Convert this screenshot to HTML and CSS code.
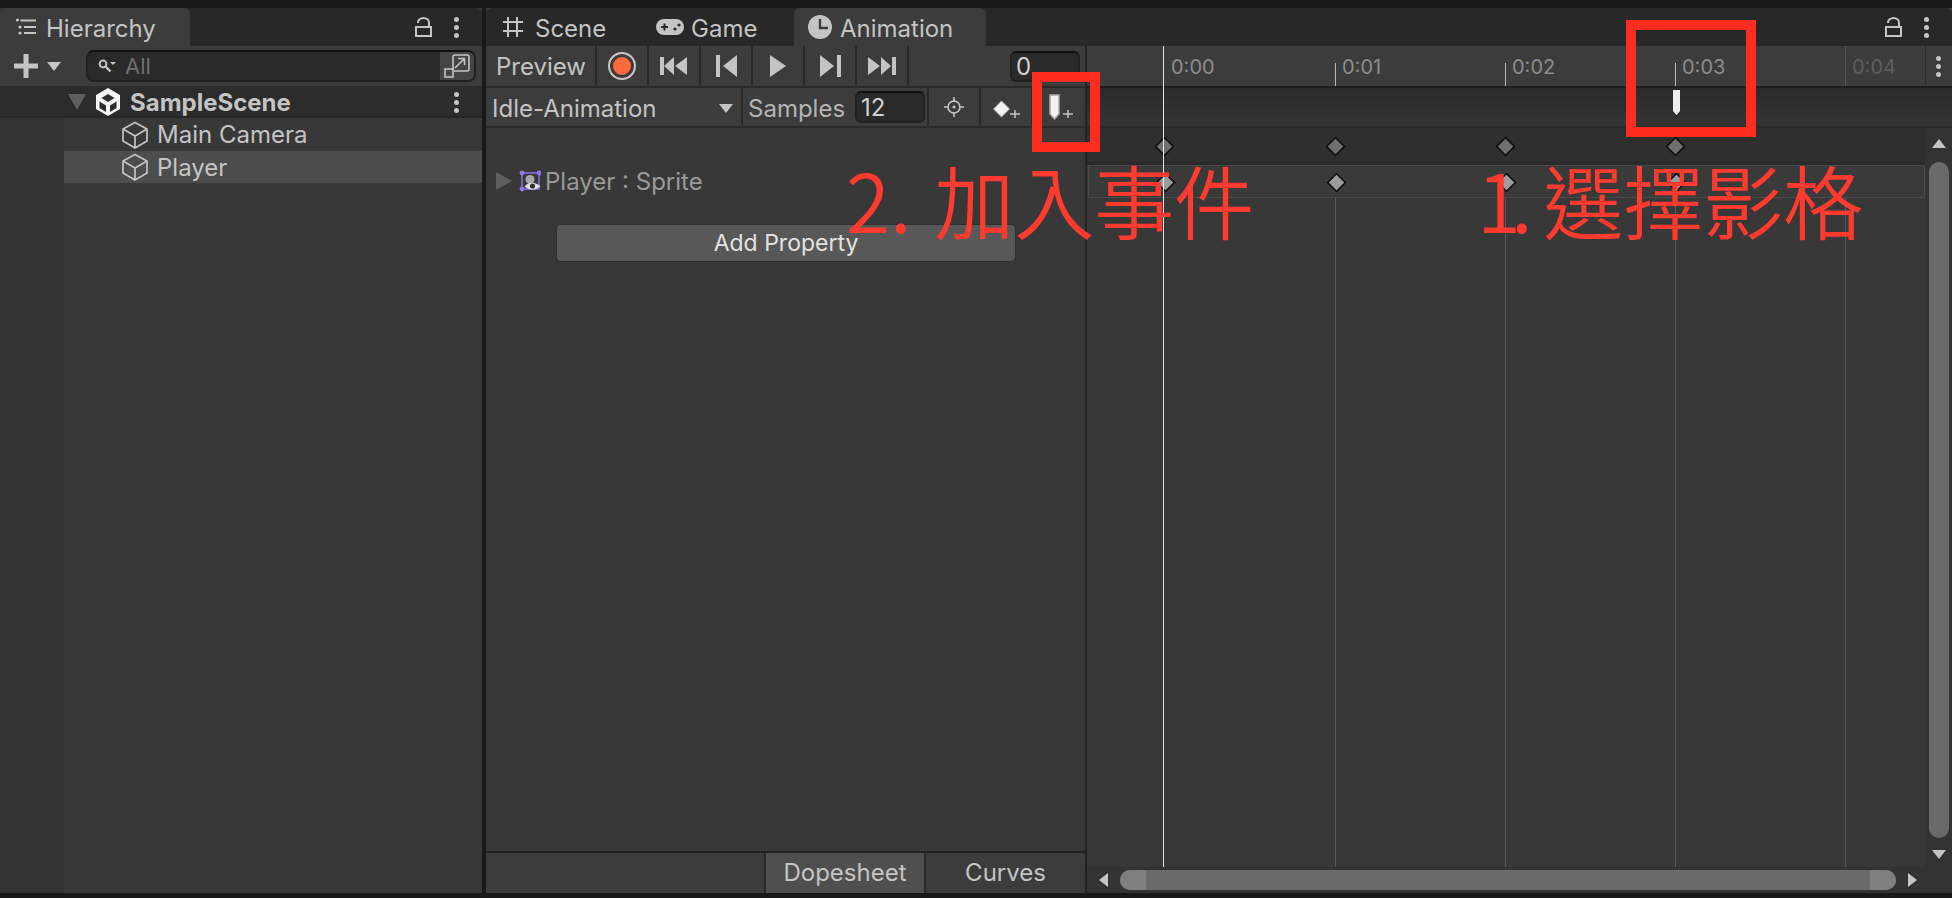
FILE: index.html
```html
<!DOCTYPE html>
<html lang="en">
  <head>
    <meta charset="UTF-8" />
    <title>Animation</title>
    <link rel="stylesheet" href="styles.css">
  </head>
  <body>
    <div class="editor">
      <section class="hierarchy">
        <div class="tabbar">
          <div class="tab active hier-tab">
            <svg class="ic" width="22" height="18" viewBox="0 0 22 18"><g fill="#c4c4c4"><circle cx="2.500" cy="2" r="1.600"/><circle cx="5" cy="9" r="1.600"/><circle cx="5" cy="15" r="1.600"/><rect x="5.500" y="1.500" width="15.500" height="2"/><rect x="9" y="8" width="12" height="2"/><rect x="9" y="14" width="12" height="2"/></g></svg>
            <span>Hierarchy</span>
          </div>
          <div class="tab-tools">
            <svg class="ic" width="17" height="20" viewBox="0 0 17 20"><path d="M1 10h15v9H1zM3 6v-.500a5.500 4.500 0 0 1 11 0V10" fill="none" stroke="#c4c4c4" stroke-width="2"/></svg>
            <span class="kebab"><i></i><i></i><i></i></span>
          </div>
        </div>
        <div class="hier-toolbar">
          <svg class="ic" width="24" height="24" viewBox="0 0 24 24"><path d="M0 12h24M12 0v24" stroke="#c4c4c4" stroke-width="5"/></svg>
          <span class="tri-down"></span>
          <div class="search">
            <svg class="ic" width="18" height="14" viewBox="0 0 18 14"><circle cx="5" cy="5" r="3.400" fill="none" stroke="#c4c4c4" stroke-width="2"/><path d="M7.500 7.500l5 5" stroke="#c4c4c4" stroke-width="2.400"/><path d="M12 3h6l-3 3z" fill="#c4c4c4"/></svg>
            <span class="search-hint">All</span>
            <span class="search-btn">
              <svg class="ic" width="26" height="24" viewBox="0 0 26 24"><path d="M9 16V3a2 2 0 0 1 2-2h12a2 2 0 0 1 2 2v12a2 2 0 0 1-2 2H10" fill="none" stroke="#c4c4c4" stroke-width="1.600"/><path d="M11 14l9-9M14 4.500h6.500V11" fill="none" stroke="#c4c4c4" stroke-width="1.600"/><rect x="1" y="15" width="8" height="8" fill="none" stroke="#c4c4c4" stroke-width="1.600"/></svg>
            </span>
          </div>
        </div>
        <div class="scene-row">
          <span class="tri-tree"></span>
          <svg class="ic" width="24" height="28" viewBox="0 0 24 28"><path d="M12 0l12 7v14l-12 7-12-7V7z" fill="#f2f2f2"/><path d="M12 6l6.500 4L12 14l-6.500-4zM3.500 13.500L10 17.500V24l-6.500-4zM20.500 13.500L14 17.500V24l6.500-4z" fill="#2c2c2c"/></svg>
          <span class="scene-name">SampleScene</span>
          <span class="kebab"><i></i><i></i><i></i></span>
        </div>
        <div class="tree">
          <div class="gutter"></div>
          <div class="items">
            <div class="item">
              <svg class="ic" width="26" height="28" viewBox="0 0 26 28"><path d="M13 1.500L25 8v12l-12 7-12-7V8zM1 8l12 7 12-7M13 15v12" fill="none" stroke="#c4c4c4" stroke-width="1.700"/></svg>
              <span>Main Camera</span>
            </div>
            <div class="item selected">
              <svg class="ic" width="26" height="28" viewBox="0 0 26 28"><path d="M13 1.500L25 8v12l-12 7-12-7V8zM1 8l12 7 12-7M13 15v12" fill="none" stroke="#c4c4c4" stroke-width="1.700"/></svg>
              <span>Player</span>
            </div>
          </div>
        </div>
      </section>

      <section class="animation">
        <div class="tabbar">
          <div class="tab scene-tab">
            <svg class="ic" width="20" height="20" viewBox="0 0 20 20"><path d="M5 0v20M14 0v20M0 5h20M0 14h20" stroke="#c4c4c4" stroke-width="2"/></svg>
            <span>Scene</span>
          </div>
          <div class="tab game-tab">
            <svg class="ic" width="28" height="16" viewBox="0 0 28 16"><rect width="28" height="16" rx="8" fill="#c4c4c4"/><path d="M5 8h7M8.500 4.500v7" stroke="#282828" stroke-width="2"/><circle cx="19" cy="10" r="1.600" fill="#282828"/><circle cx="23" cy="6" r="1.600" fill="#282828"/></svg>
            <span>Game</span>
          </div>
          <div class="tab active anim-tab">
            <svg class="ic" width="24" height="24" viewBox="0 0 24 24"><circle cx="12" cy="12" r="12" fill="#c4c4c4"/><path d="M12 4v9h8" fill="none" stroke="#3c3c3c" stroke-width="2.400"/></svg>
            <span>Animation</span>
          </div>
          <div class="tab-tools">
            <svg class="ic" width="17" height="20" viewBox="0 0 17 20"><path d="M1 10h15v9H1zM3 6v-.500a5.500 4.500 0 0 1 11 0V10" fill="none" stroke="#c4c4c4" stroke-width="2"/></svg>
            <span class="kebab"><i></i><i></i><i></i></span>
          </div>
        </div>

        <div class="anim-body">
          <div class="controls">
            <div class="ctrl-row">
              <div class="cell preview">Preview</div>
              <div class="cell btn"><span class="record"></span></div>
              <div class="cell btn">
                <svg class="ic" width="28" height="18" viewBox="0 0 28 18"><path d="M0 0h4v18H0zM14 0v18L4 9zM27 0v18L15 9z" fill="#c4c4c4"/></svg>
              </div>
              <div class="cell btn">
                <svg class="ic" width="21" height="22" viewBox="0 0 21 22"><path d="M0 0h4v22H0zM21 0v22L7 11z" fill="#c4c4c4"/></svg>
              </div>
              <div class="cell btn">
                <svg class="ic" width="16" height="22" viewBox="0 0 16 22"><path d="M0 0l16 11L0 22z" fill="#c4c4c4"/></svg>
              </div>
              <div class="cell btn">
                <svg class="ic" width="21" height="22" viewBox="0 0 21 22"><path d="M0 0l14 11L0 22zM17 0h4v22h-4z" fill="#c4c4c4"/></svg>
              </div>
              <div class="cell btn">
                <svg class="ic" width="28" height="18" viewBox="0 0 28 18"><path d="M0 0l12 9L0 18zM13 0l10 9-10 9zM24 0h4v18h-4z" fill="#c4c4c4"/></svg>
              </div>
              <div class="frame-wrap"><div class="field frame">0</div></div>
            </div>
            <div class="ctrl-row second">
              <div class="cell clip">
                <span>Idle-Animation</span>
                <span class="tri-down small"></span>
              </div>
              <div class="cell samples">
                <span>Samples</span>
                <div class="field rate">12</div>
              </div>
              <div class="cell btn">
                <svg class="ic" width="20" height="20" viewBox="0 0 20 20"><circle cx="10" cy="10" r="6" fill="none" stroke="#c4c4c4" stroke-width="1.600"/><circle cx="10" cy="10" r="1.500" fill="#c4c4c4"/><path d="M10 0v5M10 15v5M0 10h5M15 10h5" stroke="#c4c4c4" stroke-width="1.600"/></svg>
              </div>
              <div class="cell btn">
                <svg class="ic" width="30" height="28" viewBox="0 0 30 28"><path d="M10.500 8l8 8-8 8-8-8z" fill="#f2f2f2" stroke="#aaa" stroke-width="1"/><path d="M19 21h10M24 17v8" stroke="#c4c4c4" stroke-width="1.500"/></svg>
              </div>
              <div class="cell btn last">
                <svg class="ic" width="26" height="30" viewBox="0 0 26 30"><path d="M2 3h9v19l-4.500 5L2 22z" fill="#f2f2f2" stroke="#aaa" stroke-width="1.500"/><path d="M15 22h10M20 18v8" stroke="#c4c4c4" stroke-width="1.500"/></svg>
              </div>
            </div>
            <div class="props">
              <div class="prop-row">
                <span class="tri-right"></span>
                <svg class="ic" width="22" height="22" viewBox="0 0 22 22"><path d="M3 3h17v16H3z" fill="none" stroke="#8f74e8" stroke-width="1.400"/><g fill="#8f74e8"><circle cx="3" cy="3" r="2.400"/><circle cx="20" cy="3" r="2.400"/><circle cx="3" cy="19" r="2.400"/></g><circle cx="11" cy="9.500" r="4.500" fill="#a8a8a8"/><path d="M5.500 16.500q7.500-7.500 16 0-8.500 6.500-16 0z" fill="#e4e4e4"/><circle cx="13.500" cy="16" r="2.600" fill="#333"/></svg>
                <span>Player : Sprite</span>
              </div>
              <div class="add-btn">Add Property</div>
            </div>
            <div class="mode-tabs">
              <div class="mode-space"></div>
              <div class="mode on">Dopesheet</div>
              <div class="mode">Curves</div>
            </div>
          </div>

          <div class="timeline">
            <div class="ruler">
              <span class="label at-0">0:00</span>
              <span class="tick at-1"></span><span class="label at-1">0:01</span>
              <span class="tick at-2"></span><span class="label at-2">0:02</span>
              <span class="tick at-3"></span><span class="label at-3">0:03</span>
              <span class="tick tall at-4"></span><span class="label dim at-4">0:04</span>
              <span class="ruler-menu"><span class="kebab"><i></i><i></i><i></i></span></span>
            </div>
            <div class="event-row">
              <svg class="event-mark at-3" width="8" height="25" viewBox="0 0 8 25"><path d="M0 0h7v21l-3.500 4L0 21z" fill="#eee"/></svg>
            </div>
            <div class="key-row summary">
              <span class="key at-0"></span><span class="key at-1"></span><span class="key at-2"></span><span class="key at-3"></span>
            </div>
            <div class="key-row sprite">
              <span class="key at-0"></span><span class="key at-1"></span><span class="key at-2"></span><span class="key at-3"></span>
            </div>
            <div class="grid">
              <span class="line at-1"></span><span class="line at-2"></span><span class="line at-3"></span><span class="line at-4"></span>
            </div>
            <div class="vscroll">
              <span class="tri-up"></span>
              <span class="vthumb"></span>
              <span class="tri-down small"></span>
            </div>
            <div class="hscroll">
              <span class="tri-left"></span>
              <div class="hthumb"><span class="cap"></span><span class="cap"></span></div>
              <span class="tri-right-sm"></span>
            </div>
            <span class="playhead"></span>
          </div>
        </div>
      </section>
    </div>

    <div class="callout box-frame"></div>
    <div class="callout box-event"></div>
    <div class="note note-event">2. 加入事件</div>
    <div class="note note-frame"><span class="tight">1</span>. 選擇影格</div>
  </body>
</html>
```

FILE: styles.css
```css
* {
  box-sizing: border-box;
}

body {
  margin: 0;
  height: 898px;
  overflow: hidden;
  position: relative;
  background-color: #191919;
  color: #c4c4c4;
  font-family: Inter, "Noto Sans", sans-serif;
  font-size: 24px;
}

.editor {
  display: flex;
  gap: 4px;
  height: 893px;
  padding-top: 8px;
}

.ic {
  display: block;
  flex: none;
}

.hierarchy {
  width: 482px;
  display: flex;
  flex-direction: column;
  background-color: #383838;
}

.animation {
  flex: 1;
  display: flex;
  flex-direction: column;
  background-color: #3c3c3c;
  min-width: 0;
}

/* tab strips */
.tabbar {
  height: 38px;
  display: flex;
  background-color: #282828;
  border-radius: 6px 6px 0 0;
}

.tab {
  display: flex;
  align-items: center;
  height: 38px;
}

.tab span {
  margin-top: 2px;
}

.tab.active {
  background-color: #3c3c3c;
  border-radius: 6px 6px 0 0;
}

.hier-tab {
  width: 190px;
  padding-left: 15px;
  gap: 9px;
}

.scene-tab {
  width: 150px;
  padding-left: 17px;
  gap: 12px;
}

.game-tab {
  width: 158px;
  padding-left: 20px;
  gap: 7px;
}

.anim-tab {
  width: 192px;
  padding-left: 14px;
  gap: 8px;
}

.tab-tools {
  margin-left: auto;
  display: flex;
  align-items: center;
  gap: 22px;
  padding-right: 22px;
}

.kebab {
  display: flex;
  flex-direction: column;
  gap: 3px;
  width: 6px;
}

.kebab i {
  width: 5px;
  height: 5px;
  border-radius: 50%;
  background-color: #c4c4c4;
}

/* hierarchy */
.hier-toolbar {
  height: 40px;
  display: flex;
  align-items: center;
  padding-left: 14px;
  background-color: #3c3c3c;
}

.tri-down {
  width: 0;
  height: 0;
  margin-left: 9px;
  border-left: 7px solid transparent;
  border-right: 7px solid transparent;
  border-top: 9px solid #c4c4c4;
}

.search {
  display: flex;
  align-items: center;
  width: 390px;
  height: 32px;
  margin-left: 25px;
  padding-left: 10px;
  background-color: #2a2a2a;
  border: 2px solid #212121;
  border-top-color: #111;
  border-radius: 8px;
  overflow: hidden;
}

.search-hint {
  margin-left: 9px;
  font-size: 22px;
  color: #6e6e6e;
}

.search-btn {
  margin-left: auto;
  width: 34px;
  height: 100%;
  display: flex;
  align-items: center;
  justify-content: center;
  background-color: #454545;
}

.scene-row {
  height: 32px;
  display: flex;
  align-items: center;
  padding: 2px 22px 0 68px;
  background-color: #2c2c2c;
  border-bottom: 2px solid #262626;
}

.tri-tree {
  width: 0;
  height: 0;
  border-left: 9px solid transparent;
  border-right: 9px solid transparent;
  border-top: 16px solid #5e5e5e;
}

.scene-row .ic {
  margin-left: 10px;
}

.scene-name {
  margin-left: 10px;
  font-weight: 700;
  flex: 1;
}

.tree {
  flex: 1;
  display: flex;
}

.gutter {
  width: 64px;
  background-color: #333;
}

.items {
  flex: 1;
}

.item {
  height: 33px;
  display: flex;
  align-items: center;
  gap: 9px;
  padding-left: 58px;
}

.item.selected {
  background-color: #4d4d4d;
  height: 32px;
}

/* animation window */
.anim-body {
  flex: 1;
  display: flex;
  min-height: 0;
}

.controls {
  width: 601px;
  display: flex;
  flex-direction: column;
  border-right: 2px solid #232323;
}

.ctrl-row {
  height: 42px;
  display: flex;
  border-bottom: 2px solid #2a2a2a;
}

.ctrl-row.second {
  height: 40px;
}

.cell {
  display: flex;
  align-items: center;
  border-right: 2px solid #2a2a2a;
}

.second .clip,
.second .samples {
  padding-top: 2px;
}

.preview {
  width: 111px;
  padding-left: 10px;
}

.btn {
  width: 52px;
  justify-content: center;
}

.btn.last {
  border-right: 0;
  padding-left: 4px;
}

.record {
  width: 28px;
  height: 28px;
  border-radius: 50%;
  border: 2px solid #c4c4c4;
  background-color: #ff6a3c;
  box-shadow: inset 0 0 0 3px #3c3c3c;
}

.frame-wrap {
  flex: 1;
  display: flex;
  justify-content: flex-end;
  align-items: center;
  padding-right: 5px;
}

.field {
  background-color: #2a2a2a;
  border: 2px solid #212121;
  border-top-color: #111;
  border-radius: 6px;
  display: flex;
  align-items: center;
  padding-left: 4px;
  color: #d2d2d2;
}

.frame {
  width: 70px;
  height: 31px;
}

.clip {
  width: 257px;
  padding: 0 8px 0 6px;
  justify-content: space-between;
}

.samples {
  width: 186px;
  padding-left: 5px;
  gap: 10px;
  color: #b4b4b4;
}

.rate {
  width: 70px;
  height: 32px;
  margin-top: -2px;
}

.tri-down.small {
  margin: 0;
}

.props {
  flex: 1;
  position: relative;
  padding-top: 40px;
  background-color: #383838;
}

.prop-row {
  display: flex;
  align-items: center;
  padding-left: 10px;
  gap: 7px;
  height: 26px;
  color: #9a9a9a;
}

.prop-row .ic {
  margin-right: -3px;
}

.tri-right {
  width: 0;
  height: 0;
  border-top: 9px solid transparent;
  border-bottom: 9px solid transparent;
  border-left: 16px solid #5f5f5f;
}

.add-btn {
  width: 460px;
  height: 38px;
  margin: 30px 0 0 70px;
  display: flex;
  align-items: center;
  justify-content: center;
  border-radius: 5px;
  background-color: #585858;
  border: 1px solid #2f2f2f;
  font-size: 23px;
  color: #e2e2e2;
}

.mode-tabs {
  height: 42px;
  display: flex;
  border-top: 2px solid #232323;
}

.mode-space {
  width: 280px;
  border-right: 2px solid #2a2a2a;
}

.mode {
  width: 160px;
  display: flex;
  align-items: center;
  justify-content: center;
  border-right: 2px solid #2a2a2a;
  padding-bottom: 2px;
}

.mode:last-child {
  border-right: 0;
  flex: 1;
}

.mode.on {
  background-color: #4f4f4f;
}

/* timeline */
.timeline {
  flex: 1;
  position: relative;
  display: grid;
  grid-template-columns: 1fr 27px;
  grid-template-rows: 42px 40px 37px 33px 1fr 26px;
  background-color: #383838;
}

.ruler {
  grid-column: 1 / -1;
  position: relative;
  background-color: #3c3c3c;
  border-bottom: 2px solid #1e1e1e;
}

.ruler-menu {
  position: absolute;
  right: 0;
  top: 0;
  bottom: 0;
  width: 27px;
  display: flex;
  align-items: center;
  justify-content: center;
  background-color: #3c3c3c;
  border-left: 1px solid #2a2a2a;
}

.at-0 { left: 77px; }
.at-1 { left: 248px; }
.at-2 { left: 418px; }
.at-3 { left: 588px; }
.at-4 { left: 758px; }

.tick {
  position: absolute;
  bottom: 0;
  height: 23px;
  width: 1px;
  background-color: #b8b8b8;
}

.tick.tall {
  height: 40px;
  background-color: #555;
}

.label {
  position: absolute;
  top: 9px;
  margin-left: 7px;
  font-size: 20px;
  color: #8c8c8c;
}

.label.dim {
  color: #5e5e5e;
}

.event-row {
  grid-column: 1 / -1;
  position: relative;
  background-image: linear-gradient(#2b2b2b, #343434);
  border-bottom: 2px solid #2a2a2a;
}

.event-mark {
  position: absolute;
  top: 2px;
  margin-left: -2px;
}

.key-row {
  grid-column: 1;
  position: relative;
}

.summary {
  background-color: #2f2f2f;
  border-bottom: 3px solid #2a2a2a;
}

.sprite {
  background-color: #3a3a3a;
  border: 1px solid #4a4a4a;
  margin-left: 1px;
}

.key {
  position: absolute;
  top: 11px;
  width: 15px;
  height: 15px;
  margin-left: -7px;
  background-color: #6f6f6f;
  border: 2px solid #111;
  transform: rotate(45deg);
}

.sprite .key {
  top: 9px;
  margin-left: -8px;
  background-color: #9c9c9c;
}

.grid {
  grid-column: 1;
  grid-row: 5;
  position: relative;
}

.line {
  position: absolute;
  top: 0;
  bottom: 0;
  width: 1px;
  background-color: #5a5a5a;
}

.vscroll {
  grid-column: 2;
  grid-row: 3 / 6;
  display: flex;
  flex-direction: column;
  align-items: center;
  padding: 11px 0 8px;
  background-color: #333;
}

.tri-up {
  width: 0;
  height: 0;
  border-left: 7px solid transparent;
  border-right: 7px solid transparent;
  border-bottom: 9px solid #c4c4c4;
}

.vthumb {
  flex: 1;
  width: 20px;
  margin: 14px 0 12px;
  border-radius: 10px;
  background-color: #6a6a6a;
}

.hscroll {
  grid-column: 1 / -1;
  display: flex;
  align-items: center;
  padding: 0 35px 0 12px;
  background-color: #333;
}

.tri-left {
  width: 0;
  height: 0;
  border-top: 7px solid transparent;
  border-bottom: 7px solid transparent;
  border-right: 9px solid #c4c4c4;
}

.tri-right-sm {
  width: 0;
  height: 0;
  border-top: 7px solid transparent;
  border-bottom: 7px solid transparent;
  border-left: 9px solid #c4c4c4;
}

.hthumb {
  flex: 1;
  height: 20px;
  margin: 0 12px;
  display: flex;
  justify-content: space-between;
  border-radius: 10px;
  overflow: hidden;
  background-color: #6a6a6a;
}

.cap {
  width: 26px;
  background-color: #808080;
}

.playhead {
  position: absolute;
  left: 76px;
  top: 0;
  bottom: 26px;
  width: 1px;
  background-color: #e6e6e6;
}

/* red annotations pasted over the screenshot */
.callout {
  position: absolute;
  border: 10px solid #ff2c20;
}

.box-frame {
  left: 1626px;
  top: 20px;
  width: 130px;
  height: 117px;
}

.box-event {
  left: 1032px;
  top: 72px;
  width: 68px;
  height: 80px;
}

.note {
  position: absolute;
  font-family: "Noto Sans CJK TC", "Noto Sans", sans-serif;
  font-size: 80px;
  font-weight: 350;
  line-height: 1;
  color: #ff3b30;
  white-space: nowrap;
}

.note-event {
  left: 846px;
  top: 158px;
  word-spacing: 5px;
}

.note-frame {
  left: 1477px;
  top: 158px;
  word-spacing: -7px;
}

.tight {
  letter-spacing: -10px;
}
```
